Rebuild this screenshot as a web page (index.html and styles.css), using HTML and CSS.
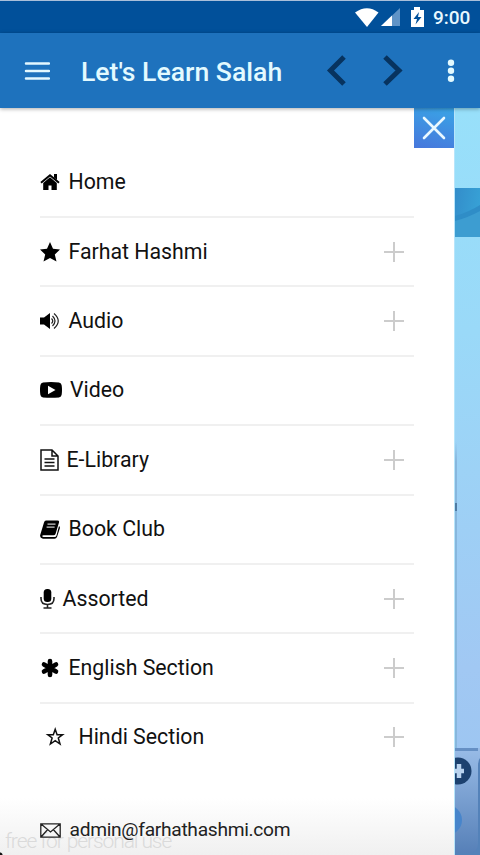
FILE: index.html
```html
<!DOCTYPE html>
<html lang="en">
<head>
<meta charset="utf-8">
<title>Let's Learn Salah</title>
<link rel="stylesheet" href="styles.css">
</head>
<body>
<div class="phone">
  <header class="status">
    <svg class="signals" width="70" height="22" viewBox="0 0 70 22">
      <path fill="#fff" d="M0 5.500Q12-3 23.500 5.500L12 20Z"/>
      <path fill="#5f93c7" d="M26 19L45 1V19Z"/>
      <path fill="#fff" d="M26 19L37 8.500V19Z"/>
      <path fill="#fff" d="M56 3H59V0H65V3H69V20H56Z"/>
      <path fill="#01509a" d="M64 5L58.500 12H62L60.500 17.500L66.500 10H63Z"/>
    </svg>
    <span class="clock">9:00</span>
  </header>
  <nav class="toolbar">
    <svg class="burger" width="26" height="18" viewBox="0 0 26 18"><path d="M2 1.500H25M2 9H25M2 16.500H25" stroke="#e3f8ff" stroke-width="2.500" stroke-linecap="round"/></svg>
    <h1 class="title">Let's Learn Salah</h1>
    <svg class="nav-icons" width="130" height="32" viewBox="0 0 130 32">
      <path d="M18 2L4.500 15.500L18 29M59 2L73 15.500L59 29" fill="none" stroke="#07335f" stroke-width="5"/>
      <g fill="#e3faff"><circle cx="125" cy="7.700" r="3.200"/><circle cx="125" cy="15.700" r="3.200"/><circle cx="125" cy="23.800" r="3.200"/></g>
    </svg>
  </nav>
  <main class="stage">
    <section class="drawer">
      <button class="close" aria-label="Close"><svg width="24" height="24" viewBox="0 0 24 24"><path d="M2 2L22 22M22 2L2 22" stroke="#e9f8ff" stroke-width="2.600" stroke-linecap="round"/></svg></button>
      <ul class="menu">
        <li class="item"><svg class="icon" width="20" height="18" viewBox="0 0 20 18"><path d="M1 9.800L10 2.200L19 9.800" fill="none" stroke="#000" stroke-width="2"/><path d="M14 1H17V7L14 4.500ZM3.200 10L10 4.300L16.800 10V17H11.500V12.500H8.500V17H3.200Z"/></svg><span class="label home">Home</span></li>
        <li class="item"><svg class="icon" width="20" height="20" viewBox="0 0 20 20"><path d="M10 0L13 6.700L20 7.500L14.800 12.500L16.500 19.500L10 16L3.500 19.500L5.200 12.500L0 7.500L7 6.700Z"/></svg><span class="label farhat">Farhat Hashmi</span><i class="plus"></i></li>
        <li class="item"><svg class="icon" width="20" height="18" viewBox="0 0 20 18"><path d="M0 5.500H4L10 1V17L4 12.500H0Z"/><path d="M11.500 6.500Q14 9 11.500 11.500M12.500 4Q17.500 9 12.500 14M14 1.500Q22.500 9 14 16.500" fill="none" stroke="#222" stroke-width="1.200"/></svg><span class="label audio">Audio</span><i class="plus"></i></li>
        <li class="item"><svg class="icon" width="22" height="16" viewBox="0 0 22 16"><path fill-rule="evenodd" d="M3 .6Q11-.4 19 .6Q21.500 1 21.700 3.500Q22.300 8 21.700 12.500Q21.500 15 19 15.400Q11 16.300 3 15.400Q.5 15 .3 12.500Q-.3 8 .3 3.500Q.5 1 3 .6ZM8 3.700V12.300L15.500 8Z"/></svg><span class="label video">Video</span></li>
        <li class="item"><svg class="icon" width="19" height="22" viewBox="0 0 19 22"><path d="M1 1H12L18 7V21H1ZM12 1V7H18M4.500 10H14.500M4.500 13.500H14.500M4.500 17H14.500" fill="none" stroke="#111" stroke-width="1.500"/></svg><span class="label library">E-Library</span><i class="plus"></i></li>
        <li class="item"><svg class="icon" width="20" height="19" viewBox="0 0 20 19"><path d="M6 .5H17.500Q19.500 .5 19 2.500L15.500 14Q15 15.300 13.500 15.300H3.500Q2 15.300 2.300 16.300Q2.500 17 3.500 17H14.500Q16 17 16.500 15.500L19 6Q20.300 7 19.800 8.500L17 17Q16.300 18.700 14.500 18.700H3Q-.5 18 .2 15L4 2.500Q4.500 .5 6 .5Z"/><path d="M7.500 4.200H15.500M6.600 7.200H14.600" stroke="#ccc" stroke-width="1.200"/></svg><span class="label book">Book Club</span></li>
        <li class="item"><svg class="icon" width="15" height="20" viewBox="0 0 15 20"><rect x="3.700" y="0" width="7.600" height="13" rx="3.500"/><path d="M1 8V9.500Q1 15.500 7.500 15.500Q14 15.500 14 9.500V8M7.500 15V19M3.500 19H11.500" fill="none" stroke="#222" stroke-width="1.600"/></svg><span class="label assorted">Assorted</span><i class="plus"></i></li>
        <li class="item"><svg class="icon" width="20" height="20" viewBox="0 0 20 20"><path d="M10 3V17M4 6.500L16 13.500M16 6.500L4 13.500" stroke="#000" stroke-width="4.600" stroke-linecap="round"/></svg><span class="label english">English Section</span><i class="plus"></i></li>
        <li class="item"><svg class="icon" width="30" height="20" viewBox="0 0 30 20"><path d="M15.200 2.300L17.100 7.700H22.600L18.300 11L20 17L15.200 13.600L10.400 17L12.100 11L7.800 7.700H13.300Z" fill="none" stroke="#111" stroke-width="1.500"/></svg><span class="label hindi">Hindi Section</span><i class="plus"></i></li>
      </ul>
      <footer class="contact">
        <svg class="icon" width="21" height="15" viewBox="0 0 21 15"><path d="M.8 .8H20.200V14.200H.8ZM.8 .8L10.500 9L20.200 .8M.8 14.200L7.500 6.700M20.200 14.200L13.500 6.700" fill="none" stroke="#222" stroke-width="1.300"/></svg>
        <span class="label email">admin@farhathashmi.com</span>
      </footer>
      <span class="watermark">free for personal use</span>
    </section>
    <aside class="backdrop">
      <div class="banner"><svg width="25" height="49" viewBox="0 0 25 49"><path fill="#2f8dc7" d="M0 28Q14 24 25 17V24Q12 31 0 34Z"/><path fill="#3d9dd1" d="M0 33Q12 30 25 23V49H0Z"/></svg></div>
      <div class="page-edge"><i class="mark"></i></div>
      <div class="panel"><svg width="25" height="107" viewBox="0 0 25 107"><path fill="#6690c4" d="M0 0H23V3H0Z"/><circle cx="3" cy="23" r="13.500" fill="#1c416f"/><path d="M-3 23H9M4 16V30" stroke="#b9d3ef" stroke-width="4.500"/><circle cx="-8" cy="72" r="15" fill="#4785cb"/><path fill="#5482b9" d="M25 10Q23 12 23 18V96Q23 103 16 105H0V107H25Z"/></svg></div>
    </aside>
  </main>
</div>
</body>
</html>
```
FILE: styles.css
```css
* { box-sizing: border-box; }
body { margin: 0; font-family: Roboto, "Liberation Sans", sans-serif; }
.phone { width: 480px; height: 855px; display: flex; flex-direction: column; overflow: hidden; }
.status { height: 33px; flex: none; border-top: 1px solid #a9bfda; background: #01509a; display: flex; align-items: center; justify-content: flex-end; padding: 2px 10px 0 0; }
.signals { margin-right: 8px; }
.clock { width: 37px; color: #e9f8ff; font-size: 19px; font-weight: 500; line-height: 22px; white-space: nowrap; }
.toolbar { height: 75px; flex: none; background: #1e72bd; display: flex; align-items: center; padding-left: 24px; position: relative; z-index: 2; box-shadow: 0 1px 4px #0005; }
.title { margin: 3px 0 0 31px; width: 245px; color: #e3faff; font-size: 26.6px; font-weight: 500; line-height: 32px; white-space: nowrap; }
.stage { flex: 1; display: flex; min-height: 0; }
.drawer { width: 454px; flex: none; position: relative; display: flex; flex-direction: column; background: radial-gradient(circle at 0 100%, #111 2px, transparent 3px), linear-gradient(#fff 0 690px, #f0f0f0 747px); }
.close { width: 40px; height: 40px; flex: none; align-self: flex-end; border: 0; padding: 0; display: grid; place-items: center; background: linear-gradient(15deg, #4777dc, #39a5e6); }
.menu { list-style: none; margin: .6px 40px 0; padding: 0; }
.item { height: 69.4px; display: flex; align-items: center; border-bottom: 2px solid #f0f0f0; color: #111; }
.item:last-child { border-color: transparent; }
.icon { flex: none; }
.label { font-size: 21.3px; line-height: 26px; white-space: nowrap; margin-left: 8.5px; }
.video { margin-left: 8px; }
.hindi { margin-left: 8.5px; }
.library, .assorted { margin-left: 7.5px; }
.plus { margin-left: auto; margin-right: 10px; width: 20px; height: 20px; background: linear-gradient(#ccc, #ccc) center / 100% 2px no-repeat, linear-gradient(#ccc, #ccc) center / 2px 100% no-repeat; }
.contact { display: flex; align-items: center; margin: 44px 0 0 40px; height: 26px; color: #222; position: relative; z-index: 1; }
.email { font-size: 19.2px; letter-spacing: -.3px; }
.watermark { position: absolute; left: 5px; bottom: 1px; font-size: 21px; font-weight: 300; letter-spacing: -1.1px; line-height: 26px; color: #dadada; white-space: nowrap; }
.backdrop { flex: 1; min-width: 0; display: flex; flex-direction: column; background: linear-gradient(#98e0fa, #9ad9f8 30%, #a1c8f3 75%, #99c4f0); border-left: 1px solid #b7e5fb; }
.banner { margin-top: 80px; height: 49px; background: linear-gradient(100deg, #338dca, #38a5d8); }
.banner svg, .panel svg { display: block; }
.page-edge { flex: 1; width: 2px; padding-top: 266px; background: linear-gradient(transparent 40%, #87b7dd 44%); }
.mark { display: block; width: 2px; height: 8px; background: #4f7ba3; }
.panel { height: 107px; background: linear-gradient(#99bce7, #557fb7); }
```
